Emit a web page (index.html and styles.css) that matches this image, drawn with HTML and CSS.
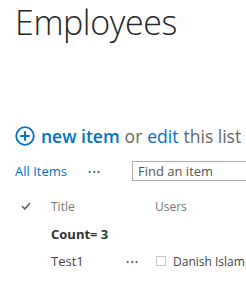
FILE: index.html
```html
<!DOCTYPE html>
<html lang="en">
<head>
  <meta charset="UTF-8" />
  <title>Employees</title>
  <link rel="stylesheet" href="styles.css">
</head>
<body>
  <div class="page">
    <h1 class="page-title">Employees</h1>

    <div class="hero">
      <svg class="hero-icon" width="20" height="20" viewBox="0 0 20 20">
        <circle cx="10" cy="10" r="8.8" fill="none" stroke="#0072c6" stroke-width="1.8" />
        <path d="M10 5.2v9.6M5.2 10h9.6" stroke="#0072c6" stroke-width="2" />
      </svg>
      <span class="hero-new">new item</span>
      <span class="hero-muted">or</span>
      <span class="hero-link">edit</span>
      <span class="hero-muted">this list</span>
    </div>

    <div class="toolbar">
      <span class="view-link">All Items</span>
      <span class="dots">•••</span>
      <div class="search">Find an item</div>
    </div>

    <div class="list">
      <div class="row header">
        <div class="col-check">
          <svg width="10" height="8" viewBox="0 0 10 8">
            <path d="M1 4.2l2.8 2.7L9 1" fill="none" stroke="#555" stroke-width="1.5" />
          </svg>
        </div>
        <div class="col-title">Title</div>
        <div class="col-users">Users</div>
      </div>
      <div class="row group">
        <div class="col-check"></div>
        <div class="col-title count">Count= 3</div>
      </div>
      <div class="row item">
        <div class="col-check"></div>
        <div class="col-title">Test1</div>
        <div class="col-menu">•••</div>
        <div class="col-users user-cell"><span class="box"></span>Danish Islam</div>
      </div>
    </div>
  </div>
</body>
</html>
```

FILE: styles.css
```css
* {
  margin: 0;
  padding: 0;
  box-sizing: border-box;
}
html, body {
  background: #fff;
  overflow: hidden;
}
body {
  font-family: "Open Sans", "Liberation Sans", sans-serif;
  color: #444;
}
.page {
  padding-left: 15px;
  width: 246px;
  overflow: hidden;
}
.page-title {
  font-size: 34px;
  font-weight: 300;
  color: #262626;
  line-height: 44px;
  letter-spacing: -0.4px;
  height: 121px;
  white-space: nowrap;
}
.hero {
  display: flex;
  align-items: center;
  gap: 5px;
  font-size: 17.5px;
  line-height: 24px;
  white-space: nowrap;
  height: 30px;
}
.hero-icon {
  flex: none;
  margin-right: 1px;
}
.hero-new {
  color: #0072c6;
  font-weight: 600;
}
.hero-link {
  color: #0072c6;
}
.hero-muted {
  color: #666;
}
.toolbar {
  display: flex;
  align-items: center;
  margin-top: 10px;
  height: 20px;
  white-space: nowrap;
  font-size: 13px;
}
.view-link {
  flex: none;
  color: #0072c6;
  width: 73px;
}
.dots {
  flex: none;
  color: #555;
  font-size: 9px;
  letter-spacing: 1px;
  width: 44px;
}
.search {
  flex: none;
  border: 1px solid #ababab;
  height: 20px;
  width: 140px;
  padding-left: 5px;
  line-height: 18px;
  font-size: 13px;
  color: #555;
}
.list {
  margin-top: 12px;
  font-size: 13px;
}
.row {
  display: flex;
  align-items: center;
  white-space: nowrap;
}
.header {
  height: 26px;
  color: #777;
  font-size: 12px;
}
.group {
  height: 30px;
}
.item {
  height: 24px;
}
.col-check {
  flex: none;
  width: 36px;
  padding-left: 6px;
  display: flex;
  align-items: center;
}
.col-title {
  flex: none;
  width: 104px;
}
.count {
  font-weight: 700;
  color: #333;
}
.col-menu {
  flex: none;
  width: 36px;
  margin-left: -29px;
  margin-right: -7px;
  color: #555;
  font-size: 9px;
  letter-spacing: 1px;
}
.col-users {
  display: flex;
  align-items: center;
}
.user-cell {
  font-size: 12px;
}
.box {
  flex: none;
  width: 10px;
  height: 10px;
  border: 1px solid #c6c6c6;
  margin-right: 7px;
  margin-left: 1px;
}
```
